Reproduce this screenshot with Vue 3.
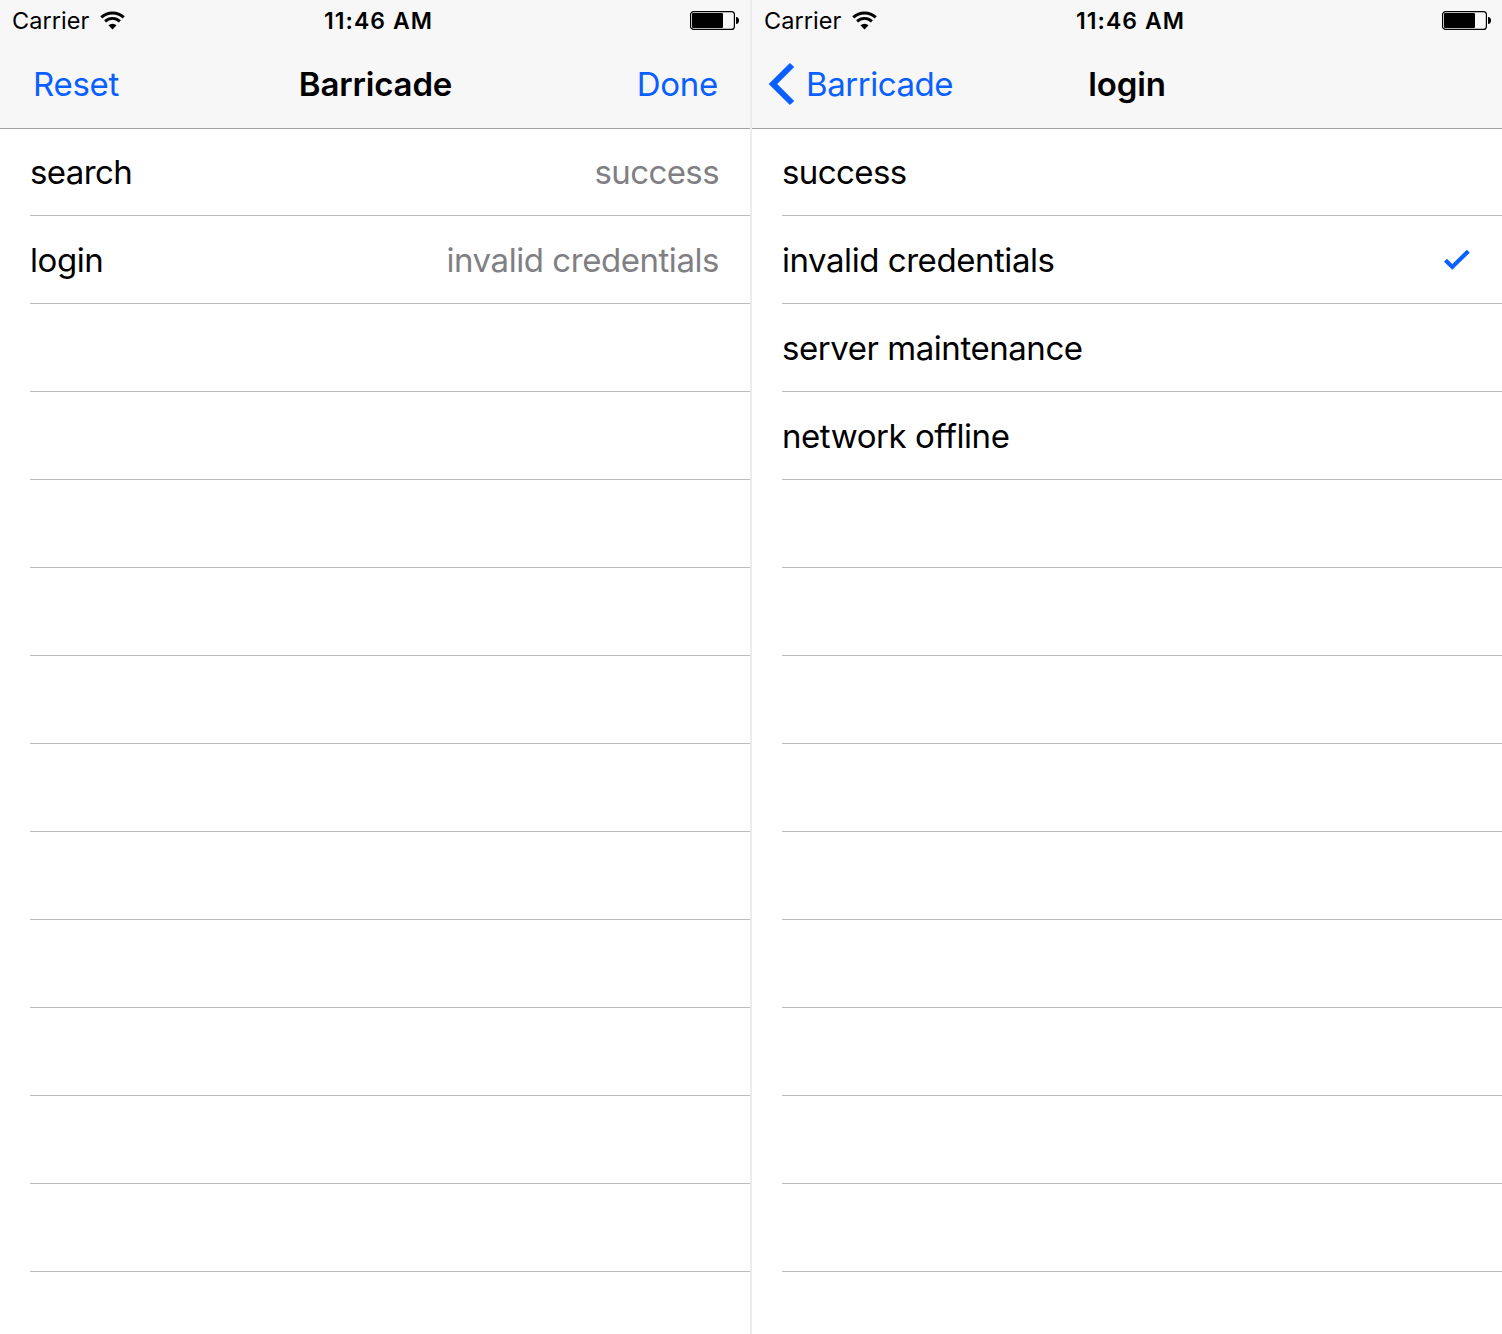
<script setup>
const ROW_COUNT = 13

const fill = (rows) =>
  Array.from({ length: ROW_COUNT }, (_, i) => rows[i] ?? {})

const screens = [
  {
    id: 'root',
    title: 'Barricade',
    left: 'Reset',
    right: 'Done',
    rows: fill([
      { label: 'search', detail: 'success' },
      { label: 'login', detail: 'invalid credentials' },
    ]),
  },
  {
    id: 'detail',
    title: 'login',
    back: 'Barricade',
    rows: fill([
      { label: 'success' },
      { label: 'invalid credentials', checked: true },
      { label: 'server maintenance' },
      { label: 'network offline' },
    ]),
  },
]
</script>

<template>
  <main class="page">
    <section v-for="s in screens" :key="s.id" class="screen" :class="s.id">
      <header class="header">
        <div class="status">
          <div class="carrier">
            <span>Carrier</span>
            <svg class="wifi" width="25" height="20" viewBox="0 0 25 20">
              <g fill="none" stroke="#000">
                <path d="M1.3 6.4A16.2 16.2 0 0 1 23.7 6.4" stroke-width="3" />
                <path d="M5.1 10.4A10.6 10.6 0 0 1 19.9 10.4" stroke-width="2.9" />
              </g>
              <path d="M8.4 14.3A5.9 5.9 0 0 1 16.6 14.3L12.5 18.5Z" fill="#000" />
            </svg>
          </div>
          <span class="time">11:46 AM</span>
          <svg class="battery" width="50" height="20" viewBox="0 0 50 20">
            <rect x="0.6" y="0.6" width="43.8" height="17.8" rx="3" fill="none" stroke="#000" stroke-width="1.2" />
            <rect x="2" y="2" width="31" height="15" rx="1" fill="#000" />
            <path d="M46 6C48 6 49 7.2 49 9.5S48 13 46 13Z" fill="#000" />
          </svg>
        </div>
        <nav class="nav">
          <div class="side">
            <svg v-if="s.back" class="chevron" width="27" height="44" viewBox="0 0 27 44">
              <path d="M0.7 22L21.9 0.9L26.2 5.1L9.2 22L26.2 38.9L21.9 43.1Z" fill="#0a60ff" />
            </svg>
            <a class="action">{{ s.back ?? s.left }}</a>
          </div>
          <h1 class="title">{{ s.title }}</h1>
          <div class="side end">
            <a v-if="s.right" class="action">{{ s.right }}</a>
          </div>
        </nav>
      </header>
      <ul class="list">
        <li v-for="(r, i) in s.rows" :key="i" class="row">
          <span class="label">{{ r.label }}</span>
          <span v-if="r.detail" class="value">{{ r.detail }}</span>
          <svg v-if="r.checked" class="check" width="26" height="22" viewBox="0 0 26 22">
            <path d="M1.4 11.2L8.3 17.9L24.3 2.2" fill="none" stroke="#0a60ff" stroke-width="4.2" />
          </svg>
        </li>
      </ul>
    </section>
  </main>
</template>

<style>
body {
  margin: 0;
  background: #fff;
}
</style>

<style scoped>
.page {
  display: flex;
  width: 1502px;
  height: 1334px;
  overflow: hidden;
  font-family: Inter, "Liberation Sans", sans-serif;
  font-size: 33px;
  letter-spacing: -0.45px;
  color: #000;
  white-space: nowrap;
}
.screen {
  box-sizing: border-box;
  width: 750px;
  flex: none;
}
.screen.root {
  width: 752px;
  border-right: 2px solid #ececec;
}
.header {
  height: 128px;
  background: #f7f7f7;
  border-bottom: 1px solid #a3a3a5;
}
.status {
  display: grid;
  grid-template-columns: 1fr auto 1fr;
  align-items: center;
  height: 41px;
  padding: 0 10px 0 12px;
  font-size: 23.5px;
}
.carrier {
  display: flex;
  align-items: center;
  gap: 11px;
  letter-spacing: 0.05px;
}
.time {
  padding-left: 5px;
  font-weight: 600;
  font-size: 23px;
  letter-spacing: 1.05px;
}
.battery {
  justify-self: end;
}
.nav {
  display: grid;
  grid-template-columns: 1fr auto 1fr;
  align-items: center;
  height: 86px;
  padding: 0 32px 0 33px;
}
.side {
  display: flex;
  align-items: center;
}
.end {
  justify-content: flex-end;
}
.detail .nav {
  padding-left: 16px;
  padding-right: 16px;
}
.chevron {
  margin-right: 11px;
}
.action {
  color: #0a60ff;
}
.root .action {
  letter-spacing: -0.3px;
}
.title {
  margin: 0;
  font-size: 33px;
  font-weight: 600;
  letter-spacing: -0.15px;
}
.list {
  list-style: none;
  margin: 0;
  padding: 0 0 0 30px;
}
.row {
  box-sizing: border-box;
  height: 88px;
  display: flex;
  align-items: center;
  justify-content: space-between;
  padding-right: 31px;
  border-bottom: 1px solid #bbbabf;
}
.row:first-child {
  height: 87px;
  letter-spacing: -0.6px;
}
.value {
  color: #7f7f84;
}
.check {
  margin-right: 1px;
}
</style>
